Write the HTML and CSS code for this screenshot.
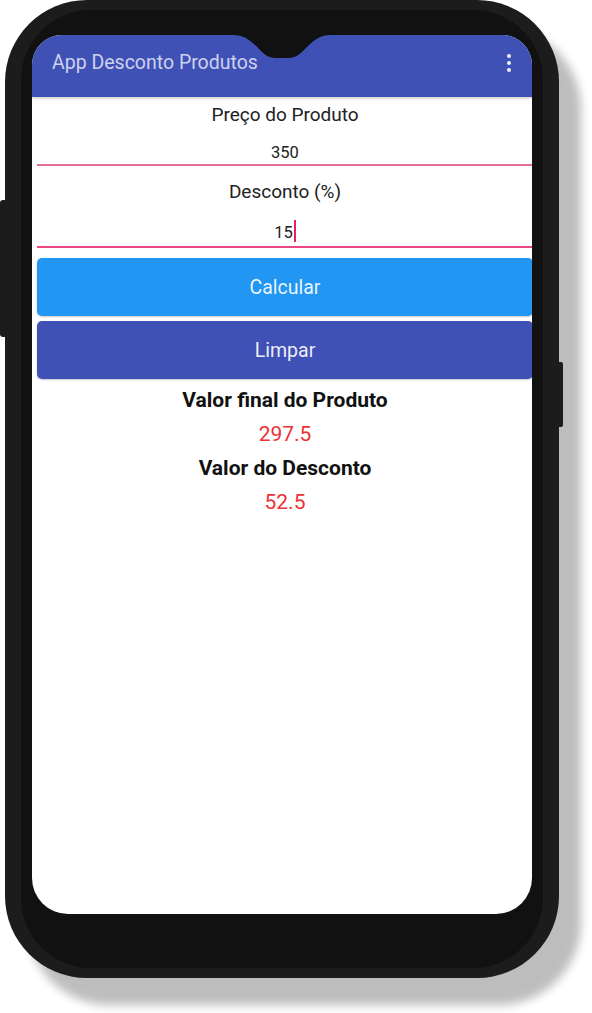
FILE: index.html
```html
<!DOCTYPE html>
<html lang="pt">
<head>
<meta charset="utf-8">
<title>App Desconto Produtos</title>
<link rel="stylesheet" href="styles.css">
</head>
<body>
<div class="phone">
  <span class="side-btn side-left"></span>
  <span class="side-btn side-right"></span>
  <div class="bezel">
    <div class="screen">
      <svg class="notch" width="98" height="23" viewBox="0 0 98 23"><path d="M0 0 C12 0 18 6 26 14 C31 19 35 23 43 23 L55 23 C63 23 67 19 72 14 C80 6 86 0 98 0 Z" fill="#111111"/></svg>
      <header class="appbar">
        <span class="title">App Desconto Produtos</span>
        <span class="menu"><i></i><i></i><i></i></span>
      </header>
      <main class="content">
        <div class="field">
          <div class="label">Preço do Produto</div>
          <div class="input">350</div>
        </div>
        <div class="field">
          <div class="label">Desconto (%)</div>
          <div class="input input-focus">15<span class="caret"></span></div>
        </div>
        <div class="btn btn-calc">Calcular</div>
        <div class="btn btn-clear">Limpar</div>
        <div class="results">
          <div class="res-title">Valor final do Produto</div>
          <div class="res-value">297.5</div>
          <div class="res-title">Valor do Desconto</div>
          <div class="res-value">52.5</div>
        </div>
      </main>
    </div>
  </div>
</div>
</body>
</html>
```
FILE: styles.css
```css
html, body {
  margin: 0;
  padding: 0;
  background: #ffffff;
}
body {
  font-family: Roboto, "Liberation Sans", sans-serif;
  min-height: 1013px;
}
.phone {
  position: relative;
  box-sizing: border-box;
  width: 554px;
  height: 978px;
  margin-left: 5px;
  padding: 10px 16px;
  border-radius: 82px;
  background: #1c1c1c;
  box-shadow: 22px 27px 10px rgba(0, 0, 0, 0.26);
}
.side-btn {
  position: absolute;
  background: #1c1c1c;
}
.side-left {
  left: -5px;
  top: 200px;
  width: 6px;
  height: 137px;
  border-radius: 3px 0 0 3px;
}
.side-right {
  right: -4px;
  top: 362px;
  width: 5px;
  height: 65px;
  border-radius: 0 2px 2px 0;
}
.bezel {
  box-sizing: border-box;
  height: 958px;
  padding: 25px 11px 54px;
  border-radius: 70px;
  background: #111111;
}
.screen {
  position: relative;
  width: 500px;
  height: 879px;
  background: #ffffff;
  border-radius: 30px 30px 36px 36px;
  overflow: hidden;
}
.notch {
  position: absolute;
  left: 201px;
  top: 0;
  display: block;
  z-index: 2;
}
.appbar {
  box-sizing: border-box;
  height: 62px;
  display: flex;
  align-items: center;
  justify-content: space-between;
  padding: 0 21px 7px 20px;
  background: #3f51b5;
  box-shadow: 0 1px 3px rgba(0, 0, 0, 0.25);
  position: relative;
  z-index: 1;
}
.title {
  font-size: 19.5px;
  color: #cdd2ee;
}
.menu {
  display: flex;
  flex-direction: column;
  gap: 3px;
}
.menu i {
  display: block;
  width: 4px;
  height: 4px;
  border-radius: 50%;
  background: #eef0fa;
}
.content {
  width: 496px;
  margin-left: 5px;
  padding-top: 7px;
  text-align: center;
  color: #212121;
}
.field + .field {
  margin-top: 15px;
}
.label {
  font-size: 19px;
  line-height: 22px;
}
.input {
  margin-top: 17px;
  font-size: 16.5px;
  line-height: 20px;
  padding-bottom: 1px;
  border-bottom: 2px solid #e2709b;
}
.input-focus {
  padding-bottom: 3px;
  border-bottom-color: #ec4785;
}
.caret {
  display: inline-block;
  width: 2px;
  height: 22px;
  margin-left: 1px;
  vertical-align: -4px;
  background: #e91e63;
}
.btn {
  display: flex;
  align-items: center;
  justify-content: center;
  height: 58px;
  border-radius: 5px;
  font-size: 19.5px;
  color: rgba(255, 255, 255, 0.92);
  box-shadow: 0 1px 2px rgba(0, 0, 0, 0.22);
}
.btn-calc {
  margin-top: 10px;
  background: #2196f3;
}
.btn-clear {
  margin-top: 5px;
  background: #3f51b5;
}
.results {
  margin-top: 4px;
}
.res-title {
  font-size: 21px;
  font-weight: bold;
  line-height: 34px;
  color: #111111;
}
.res-value {
  font-size: 21px;
  line-height: 34px;
  color: #ec3237;
}
```
